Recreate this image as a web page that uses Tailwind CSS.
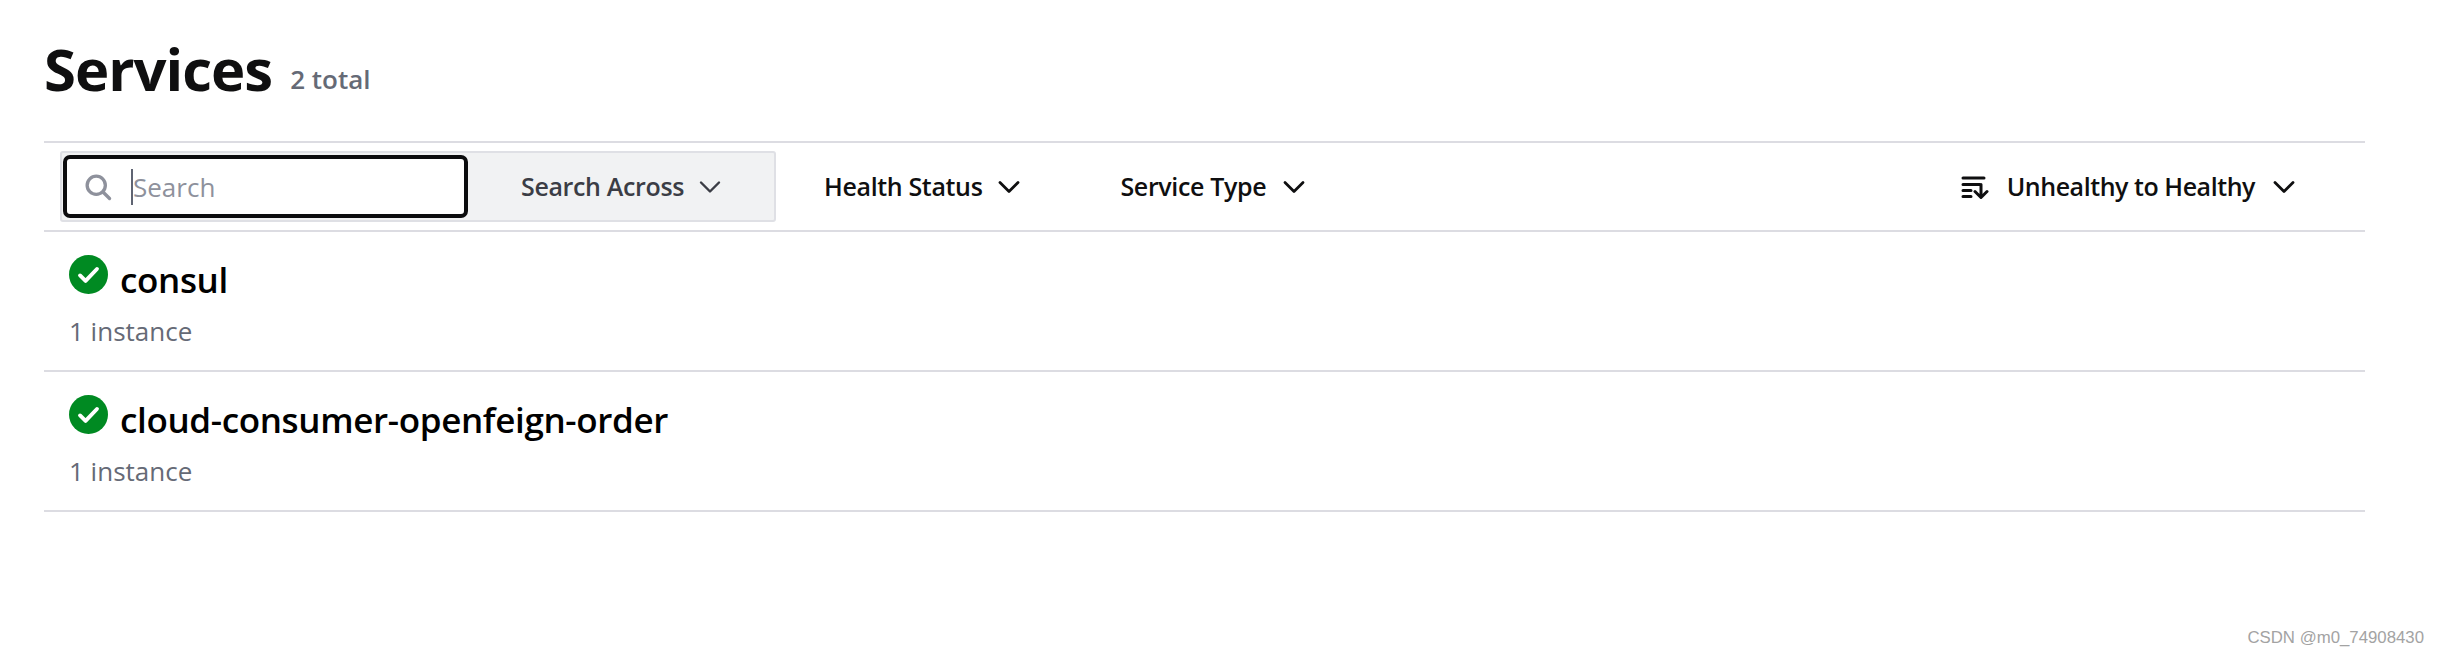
<!DOCTYPE html>
<html>
<head>
<meta charset="utf-8">
<script src="https://cdn.jsdelivr.net/npm/@tailwindcss/browser@4"></script>
</head>
<body class="bg-white font-['Open_Sans',sans-serif] text-[#000001]">
<main class="relative h-[655px] w-[2439px] overflow-hidden pl-[44px] pr-[74px]">
  <header class="flex h-[141px] items-start pt-[29px]">
    <h1 class="text-[58px] font-bold leading-[80px] tracking-[-1px] text-[#0f0f10]">Services</h1>
    <span class="ml-[18px] mt-[32px] text-[26px] font-semibold leading-[36px] text-[#656a76]">2 total</span>
  </header>
  <div class="flex h-[91px] items-center border-y-2 border-[#dcdce2] pl-[16px]">
    <div class="flex h-[71px] w-[716px] rounded-[3px] border-2 border-[#dfe0e5] bg-[#f1f2f3]">
      <div class="my-[2px] ml-px flex h-[63px] w-[405px] items-center rounded-[7px] border-[4px] border-[#0c0c0e] bg-white pl-[17px]">
        <svg class="h-[28px] w-[28px] text-[#8e919c]" viewBox="0 0 16 16" fill="none" stroke="currentColor" stroke-width="1.9" stroke-linecap="round"><circle cx="7" cy="7" r="5.2"/><path d="M11 11l3.600 3.600"/></svg>
        <span class="ml-[19px] h-[36px] w-[2px] bg-[#5f6472]"></span>
        <span class="mt-[2px] text-[26px] text-[#8e919c]">Search</span>
      </div>
      <div class="flex flex-1 items-center pl-[53px] text-[25px] font-semibold tracking-[-0.35px] text-[#3b3d45]">
        Search Across
        <svg class="ml-[14px] h-[24px] w-[24px]" viewBox="0 0 24 24" fill="none" stroke="currentColor" stroke-width="2.400" stroke-linecap="round" stroke-linejoin="round"><path d="M3 7.500l9 9 9-9"/></svg>
      </div>
    </div>
    <button class="ml-[48px] flex items-center text-[25px] font-semibold tracking-[-0.35px] text-[#0f0f10]">
      Health Status
      <svg class="ml-[15px] h-[24px] w-[24px]" viewBox="0 0 24 24" fill="none" stroke="currentColor" stroke-width="2.800" stroke-linecap="round" stroke-linejoin="round"><path d="M3 7.500l9 9 9-9"/></svg>
    </button>
    <button class="ml-[99px] flex items-center text-[25px] font-semibold tracking-[-0.35px] text-[#0f0f10]">
      Service Type
      <svg class="ml-[16px] h-[24px] w-[24px]" viewBox="0 0 24 24" fill="none" stroke="currentColor" stroke-width="2.800" stroke-linecap="round" stroke-linejoin="round"><path d="M3 7.500l9 9 9-9"/></svg>
    </button>
    <button class="ml-auto mr-[69px] flex items-center text-[25px] font-semibold tracking-[-0.45px] text-[#0f0f10]">
      <svg class="mr-[18px] h-[26px] w-[28px]" viewBox="0 0 28 26" fill="none" stroke="currentColor" stroke-width="3" stroke-linecap="round" stroke-linejoin="round"><path d="M2 4h21M2 10.500h17M2 16.500h8M2 22.500h8M20 10.500v12.500M14 17.500l6 6 6-6"/></svg>
      Unhealthy to Healthy
      <svg class="ml-[17px] h-[24px] w-[24px]" viewBox="0 0 24 24" fill="none" stroke="currentColor" stroke-width="2.800" stroke-linecap="round" stroke-linejoin="round"><path d="M3 7.500l9 9 9-9"/></svg>
    </button>
  </div>
  <ul>
    <li class="flex h-[140px] flex-col border-b-2 border-[#dcdce2] pl-[25px] pt-[23px]">
      <div class="flex h-[40px] items-start">
        <svg class="h-[39px] w-[39px] text-[#008a22]" viewBox="0 0 24 24"><circle cx="12" cy="12" r="12" fill="currentColor"/><path d="M6.800 12.600l3.400 3.300 7-7.300" fill="none" stroke="#fff" stroke-width="2.400" stroke-linecap="round" stroke-linejoin="round"/></svg>
        <span class="ml-[12px] mt-[2px] text-[35px] font-semibold leading-[46px] tracking-[-0.35px] text-black">consul</span>
      </div>
      <p class="mt-[19px] text-[26px] leading-[34px] text-[#656a76]">1 instance</p>
    </li>
    <li class="flex h-[140px] flex-col border-b-2 border-[#dcdce2] pl-[25px] pt-[23px]">
      <div class="flex h-[40px] items-start">
        <svg class="h-[39px] w-[39px] text-[#008a22]" viewBox="0 0 24 24"><circle cx="12" cy="12" r="12" fill="currentColor"/><path d="M6.800 12.600l3.400 3.300 7-7.300" fill="none" stroke="#fff" stroke-width="2.400" stroke-linecap="round" stroke-linejoin="round"/></svg>
        <span class="ml-[12px] mt-[2px] text-[35px] font-semibold leading-[46px] tracking-[-0.35px] text-black">cloud-consumer-openfeign-order</span>
      </div>
      <p class="mt-[19px] text-[26px] leading-[34px] text-[#656a76]">1 instance</p>
    </li>
  </ul>
  <span class="absolute right-[15px] top-[628px] font-['Liberation_Sans',sans-serif] text-[16.8px] leading-[20px] text-[#a3a3a3]">CSDN @m0_74908430</span>
</main>
</body>
</html>
